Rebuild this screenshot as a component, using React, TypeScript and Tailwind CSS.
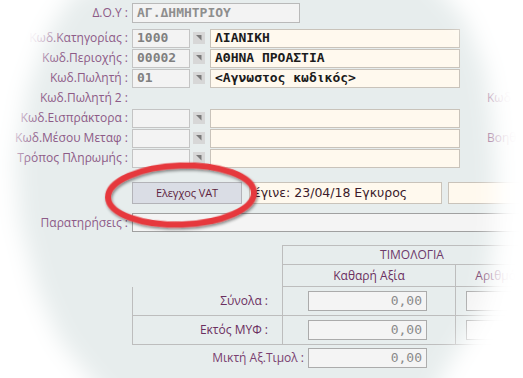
import React from "react";

const mono = "font-['DejaVu_Sans_Mono','Liberation_Mono',monospace]";

function Label({ children }: { children: React.ReactNode }) {
  return (
    <div className="w-[128px] shrink-0 text-right text-[12px] leading-none text-[#8d5a87] whitespace-nowrap">
      {children}
    </div>
  );
}

function Drop() {
  return (
    <div className="w-[12px] h-[12px] shrink-0 bg-[#d7d7d7] ml-[3px] mr-[5px]">
      <svg width="12" height="12" viewBox="0 0 12 12">
        <polygon points="3,3 8.5,3 8.5,8.5" fill="#7a7a7a" />
      </svg>
    </div>
  );
}

function CodeBox({ value }: { value?: string }) {
  return (
    <div
      className={`ml-[4px] w-[58px] h-[19px] shrink-0 bg-[#f3f3f3] border border-[#c4c4c4] pl-[4px] flex items-center text-[13px] font-bold text-[#808080] ${mono}`}
    >
      {value}
    </div>
  );
}

function Cream({ value }: { value?: string }) {
  return (
    <div
      className={`w-[250px] h-[19px] shrink-0 bg-[#fff9ee] border border-[#c9c3ba] pl-[4px] flex items-center text-[13px] font-bold text-[#1c1c1c] whitespace-nowrap ${mono}`}
    >
      {value}
    </div>
  );
}

function CodeRow({
  label,
  code,
  desc,
  right,
}: {
  label: string;
  code?: string;
  desc?: string;
  right?: string;
}) {
  return (
    <div className="flex items-center h-[20px]">
      <Label>{label}</Label>
      <CodeBox value={code} />
      <Drop />
      <Cream value={desc} />
      {right && (
        <div className="ml-[27px] text-[12px] text-[#8d5a87] whitespace-nowrap">{right}</div>
      )}
    </div>
  );
}

function NumBox({ value }: { value?: string }) {
  return (
    <div
      className={`w-[119px] h-[20px] shrink-0 bg-[#f4f4f4] border border-[#ababab] pr-[4px] flex items-center justify-end text-[13px] text-[#8a8a8a] ${mono}`}
    >
      {value}
    </div>
  );
}

const holePath =
  "M150 -30 L75 -8 L50 30 L28 90 L16 160 L20 220 L38 290 L60 340 L90 378 L130 420 L420 420 L445 370 L470 330 L485 300 L494 240 L496 180 L492 120 L485 70 L465 20 L430 -20 L380 -35 Z";

export default function App() {
  return (
    <div className="relative w-[523px] h-[378px] overflow-hidden bg-[#e7eded] font-['Open_Sans','Noto_Sans',sans-serif]">
      <div className="flex flex-col pt-[3px]">
        {/* Δ.Ο.Υ */}
        <div className="flex items-center h-[20px]">
          <Label>Δ.Ο.Υ :</Label>
          <div
            className={`ml-[4px] w-[168px] h-[20px] bg-[#f3f3f3] border border-[#b9b9b9] pl-[4px] flex items-center text-[13px] font-bold text-[#8e8e8e] ${mono}`}
          >
            ΑΓ.ΔΗΜΗΤΡΙΟΥ
          </div>
        </div>

        <div className="mt-[5px] flex flex-col">
          <CodeRow label="Κωδ.Κατηγορίας :" code="1000" desc="ΛΙΑΝΙΚΗ" />
          <CodeRow label="Κωδ.Περιοχής :" code="00002" desc="ΑΘΗΝΑ ΠΡΟΑΣΤΙΑ" />
          <CodeRow label="Κωδ.Πωλητή :" code="01" desc="<Αγνωστος κωδικός>" />
          <div className="flex items-center h-[20px]">
            <Label>Κωδ.Πωλητή 2 :</Label>
            <div className="ml-[359px] text-[12px] text-[#8d5a87] whitespace-nowrap">Κωδ</div>
          </div>
          <CodeRow label="Κωδ.Εισπράκτορα :" />
          <CodeRow label="Κωδ.Μέσου Μεταφ :" right="Βοηθ" />
          <CodeRow label="Τρόπος Πληρωμής :" />
        </div>

        {/* VAT check */}
        <div className="mt-[14px] flex items-center h-[22px]">
          <div className="w-[132px] shrink-0" />
          <div className="w-[117px] h-[22px] bg-[#dadde5] border border-[#b3b3b8] flex items-center justify-center text-[11px] tracking-[-0.1px] text-[#5e1f40]">
            Ελεγχος VAT
          </div>
          <div className="ml-[7px] w-[205px] h-[22px] bg-[#fff9ee] border border-[#c9c3ba] pl-[4px] flex items-center text-[12.5px] text-[#3a1a2a] whitespace-nowrap font-['DejaVu_Sans',sans-serif]">
            έγινε: 23/04/18 Εγκυρος
          </div>
          <div className="ml-[6px] w-[80px] h-[22px] bg-[#fff9ee] border border-[#c9c3ba]" />
        </div>

        {/* Παρατηρήσεις */}
        <div className="mt-[9px] flex items-center h-[19px]">
          <Label>Παρατηρήσεις :</Label>
          <div className="ml-[4px] w-[420px] h-[19px] bg-[#f4f4f4] border border-[#a0a0a0] border-r-0" />
        </div>

        {/* table */}
        <div className="mt-[13px] ml-[132px] flex flex-col">
          <div className="flex h-[20px]">
            <div className="w-[150px] shrink-0" />
            <div className="w-[300px] shrink-0 border-t border-l border-b border-[#bdbdbd] flex items-center">
              <div className="w-[258px] text-center text-[12px] text-[#6d3a6a]">ΤΙΜΟΛΟΓΙΑ</div>
            </div>
          </div>
          <div className="flex h-[22px]">
            <div className="w-[150px] shrink-0" />
            <div className="w-[173px] shrink-0 border-l border-b border-[#bdbdbd] flex items-center justify-center text-[12px] text-[#6b2f5f]">
              Καθαρή Αξία
            </div>
            <div className="w-[127px] shrink-0 border-l border-b border-[#bdbdbd] flex items-center">
              <div className="w-[85px] text-center text-[12px] text-[#6b2f5f] whitespace-nowrap">Αριθμός</div>
            </div>
          </div>
          {[
            ["Σύνολα :", "0,00"],
            ["Εκτός ΜΥΦ :", "0,00"],
          ].map(([l, v]) => (
            <div key={l} className="flex h-[29px]">
              <div className="w-[150px] shrink-0 border-l border-b border-[#bdbdbd] flex items-center justify-end pr-[14px] text-[12px] text-[#6b2f5f]">
                {l}
              </div>
              <div className="w-[173px] shrink-0 border-l border-b border-[#bdbdbd] flex items-center pl-[25px]">
                <NumBox value={v} />
              </div>
              <div className="w-[127px] shrink-0 border-l border-b border-[#bdbdbd] flex items-center pl-[10px]">
                <NumBox />
              </div>
            </div>
          ))}
        </div>

        <div className="mt-[3px] flex items-center h-[20px]">
          <div className="w-[304px] shrink-0 text-right text-[12px] text-[#7a3f70] whitespace-nowrap">
            Μικτή Αξ.Τιμολ :
          </div>
          <div className="ml-[4px]">
            <NumBox value="0,00" />
          </div>
        </div>
      </div>

      {/* red highlight ellipse */}
      <svg
        className="absolute left-[97px] top-[155px] pointer-events-none"
        width="175"
        height="85"
        viewBox="0 0 175 85"
      >
        <defs>
          <filter id="sh" x="-20%" y="-40%" width="140%" height="180%">
            <feDropShadow dx="1" dy="2" stdDeviation="1.6" floodColor="#000" floodOpacity="0.45" />
          </filter>
        </defs>
        <ellipse
          cx="84"
          cy="40"
          rx="73"
          ry="29.5"
          fill="none"
          stroke="#e6393d"
          strokeWidth="6"
          transform="rotate(-2 84 40)"
          filter="url(#sh)"
        />
      </svg>

      {/* soft white vignette */}
      <svg
        className="absolute left-0 top-0 pointer-events-none"
        width="523"
        height="378"
        viewBox="0 0 523 378"
      >
        <defs>
          <filter id="vg" x="-50%" y="-50%" width="200%" height="200%">
            <feGaussianBlur stdDeviation="11" />
          </filter>
        </defs>
        <path
          d={`M-150 -150 H673 V528 H-150 Z ${holePath}`}
          fill="#ffffff"
          fillRule="evenodd"
          filter="url(#vg)"
        />
      </svg>
    </div>
  );
}
